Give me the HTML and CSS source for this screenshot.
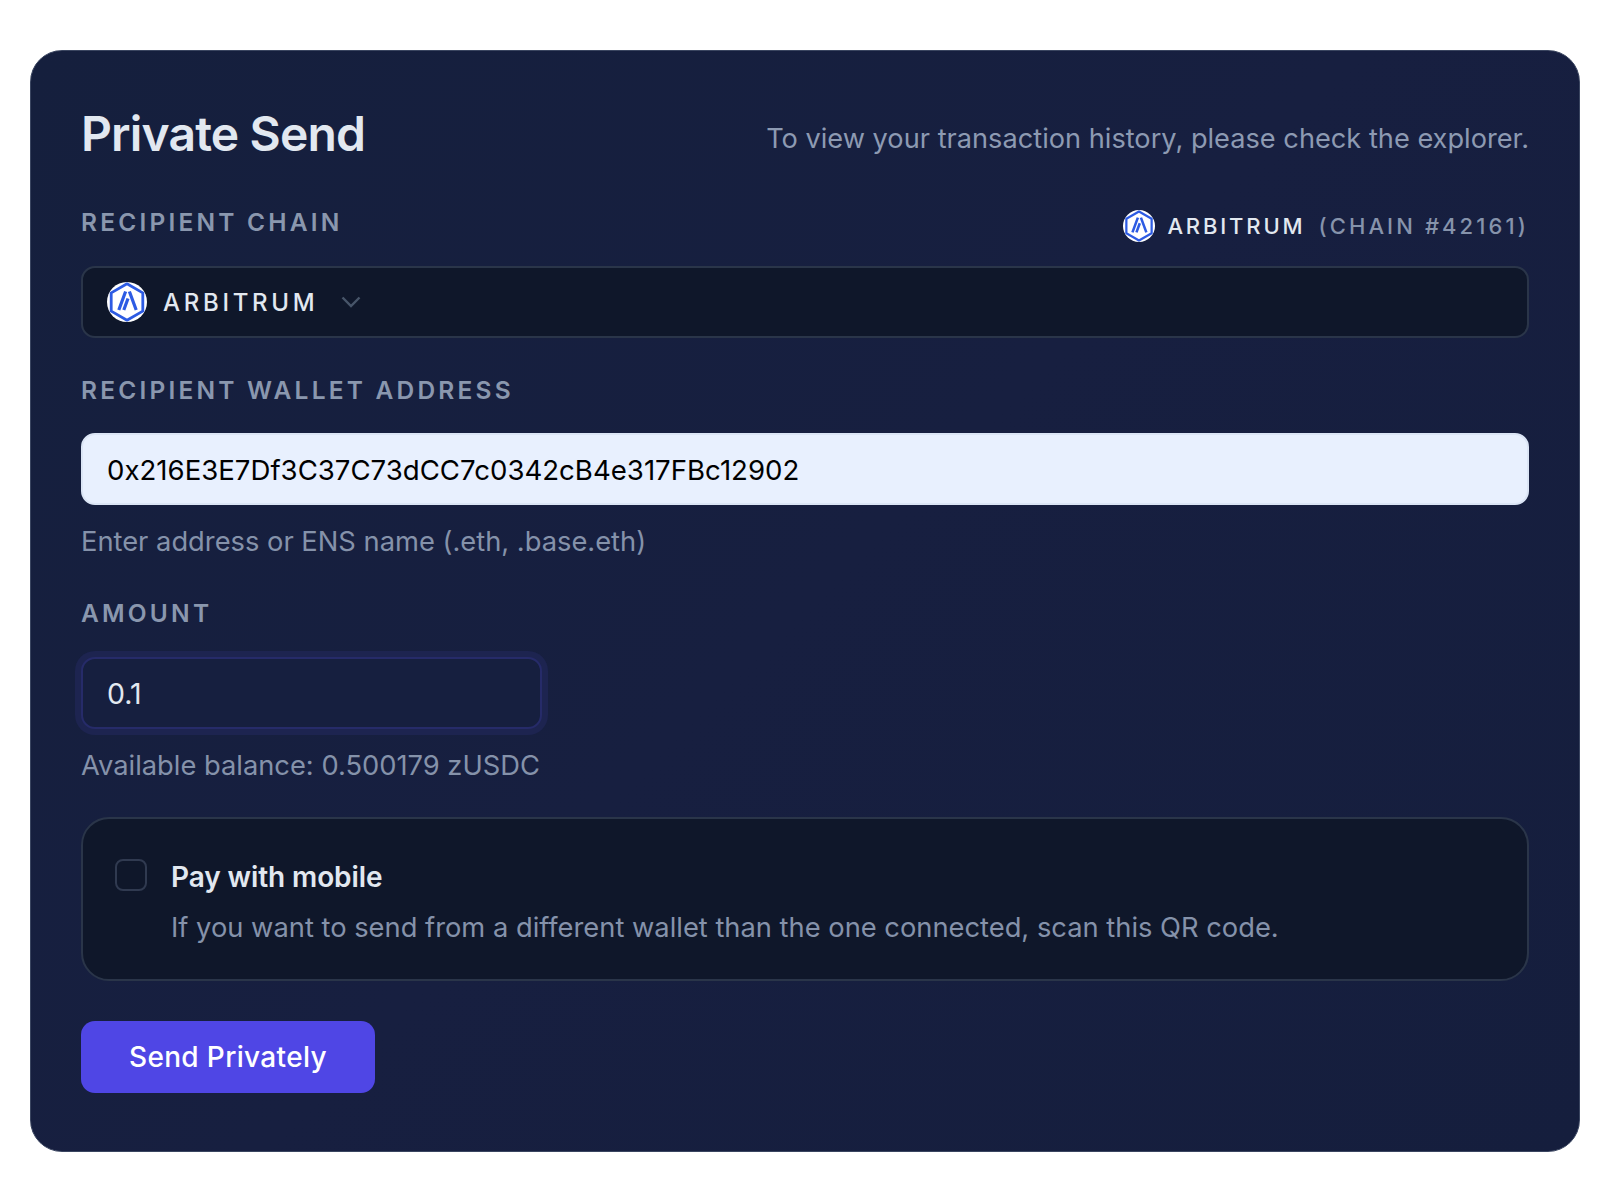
FILE: index.html
```html
<!DOCTYPE html>
<html lang="en">
<head>
<meta charset="utf-8">
<title>Private Send</title>
<link rel="stylesheet" href="styles.css">
</head>
<body>
<svg width="0" height="0" class="defs">
  <symbol id="arb" viewBox="0 0 40 40">
    <circle cx="20" cy="20" r="20" fill="#fff"/>
    <path d="M20 1.8 35.8 10.9V29.1L20 38.2 4.2 29.1V10.9Z" fill="#fff" stroke="#2d5be3" stroke-width="2.8" stroke-linejoin="round"/>
    <path d="M18.6 9.5 11.8 28M22.4 9.5 29.2 28M21 16.5 16.8 28" fill="none" stroke="#2d5be3" stroke-width="3.2"/>
  </symbol>
</svg>
<main class="card">
  <header class="head">
    <h1 class="title">Private Send</h1>
    <p class="note">To view your transaction history, please check the explorer.</p>
  </header>

  <div class="chain-row">
    <span class="label">RECIPIENT CHAIN</span>
    <span class="chain-info">
      <svg class="logo-sm"><use href="#arb"/></svg>
      <span class="chain-name">ARBITRUM</span>
      <span class="chain-id">(CHAIN #42161)</span>
    </span>
  </div>
  <div class="select">
    <svg class="logo"><use href="#arb"/></svg>
    <span class="select-name">ARBITRUM</span>
    <svg class="chev" viewBox="0 0 20 12"><path d="M1.5 1.5 10 10l8.5-8.5" fill="none" stroke="#475569" stroke-width="2.4"/></svg>
  </div>

  <div class="label addr-label">RECIPIENT WALLET ADDRESS</div>
  <div class="input addr">0x216E3E7Df3C37C73dCC7c0342cB4e317FBc12902</div>
  <p class="hint">Enter address or ENS name (.eth, .base.eth)</p>

  <div class="label amt-label">AMOUNT</div>
  <div class="input amount">0.1</div>
  <p class="hint">Available balance: 0.500179 zUSDC</p>

  <section class="mobile">
    <span class="check"></span>
    <div>
      <div class="mobile-title">Pay with mobile</div>
      <p class="mobile-text">If you want to send from a different wallet than the one connected, scan this QR code.</p>
    </div>
  </section>

  <button class="send" type="button">Send Privately</button>
</main>
</body>
</html>
```

FILE: styles.css
```css
* { box-sizing: border-box; }
html, body { margin: 0; background: #fff; }
body {
  padding: 50px 30px;
  font-family: Inter, "Liberation Sans", sans-serif;
}
.defs { position: absolute; }
.card {
  height: 1102px;
  padding: 51px 50px 0;
  border: 1px solid #3a4560;
  border-radius: 32px;
  background: linear-gradient(135deg, #151f3d 0%, #171f40 50%, #151e3d 100%);
}
.head {
  display: flex;
  justify-content: space-between;
  align-items: center;
  height: 64px;
}
.title {
  margin: 0;
  font-size: 48px;
  line-height: 64px;
  font-weight: 600;
  letter-spacing: -0.85px;
  color: #e2e8f0;
}
.note {
  margin: 10px 0 0;
  font-size: 27.2px;
  line-height: 36px;
  color: #8d9ab2;
}
.chain-row {
  display: flex;
  justify-content: space-between;
  align-items: flex-start;
  height: 60px;
  margin-top: 40px;
}
.label {
  font-size: 24.5px;
  line-height: 32px;
  font-weight: 600;
  letter-spacing: 3.2px;
  color: #8a97ae;
}
.chain-info {
  display: flex;
  align-items: center;
  height: 32px;
  margin-top: 4px;
  font-size: 22px;
  letter-spacing: 3.1px;
  font-weight: 500;
}
.logo-sm { width: 32px; height: 32px; margin-right: 12px; }
.chain-name { color: #e2e8f0; margin-right: 13px; letter-spacing: 2.85px; }
.chain-id { color: #8693ab; }
.select {
  display: flex;
  align-items: center;
  height: 72px;
  padding: 0 24px;
  border: 2px solid #2a3549;
  border-radius: 14px;
  background: #0f172a;
}
.logo { width: 40px; height: 40px; margin-right: 16px; }
.select-name {
  font-size: 24px;
  font-weight: 500;
  letter-spacing: 3.7px;
  color: #e2e8f0;
}
.chev { width: 20px; height: 12px; margin-left: 23px; }
.addr-label { margin-top: 36px; }
.input {
  display: flex;
  align-items: center;
  height: 72px;
  padding: 0 24px;
  border-radius: 14px;
  font-size: 27.6px;
}
.addr {
  margin-top: 27px;
  padding-top: 2px;
  background: #e8f0fe;
  color: #000;
  border: 2px solid #dbe5f5;
}
.hint {
  margin: 19px 0 0;
  font-size: 27.3px;
  line-height: 36px;
  color: #8592aa;
}
.amt-label { margin-top: 37px; }
.amount {
  width: 461px;
  margin-top: 28px;
  font-size: 28.5px;
  color: #e2e8f0;
  border: 2px solid #262b69;
  background: #161f3f;
  box-shadow: 0 0 0 6px #1d2450;
}
.mobile {
  display: flex;
  gap: 24px;
  height: 164px;
  margin-top: 33px;
  padding: 40px 32px 0;
  border: 2px solid #2a3549;
  border-radius: 28px;
  background: #0f172a;
}
.check {
  flex: none;
  width: 32px;
  height: 32px;
  border: 2px solid #303a50;
  border-radius: 8px;
}
.mobile-title {
  font-size: 28px;
  line-height: 36px;
  font-weight: 600;
  letter-spacing: -0.1px;
  color: #e2e8f0;
}
.mobile-text {
  margin: 15px 0 0;
  font-size: 27.3px;
  line-height: 36px;
  color: #8592aa;
}
.send {
  display: block;
  width: 294px;
  height: 72px;
  margin-top: 40px;
  padding: 0;
  border: 0;
  border-radius: 14px;
  background: #4f46e5;
  color: #fff;
  font: 500 28px Inter, "Liberation Sans", sans-serif;
  letter-spacing: 0.35px;
}
```
